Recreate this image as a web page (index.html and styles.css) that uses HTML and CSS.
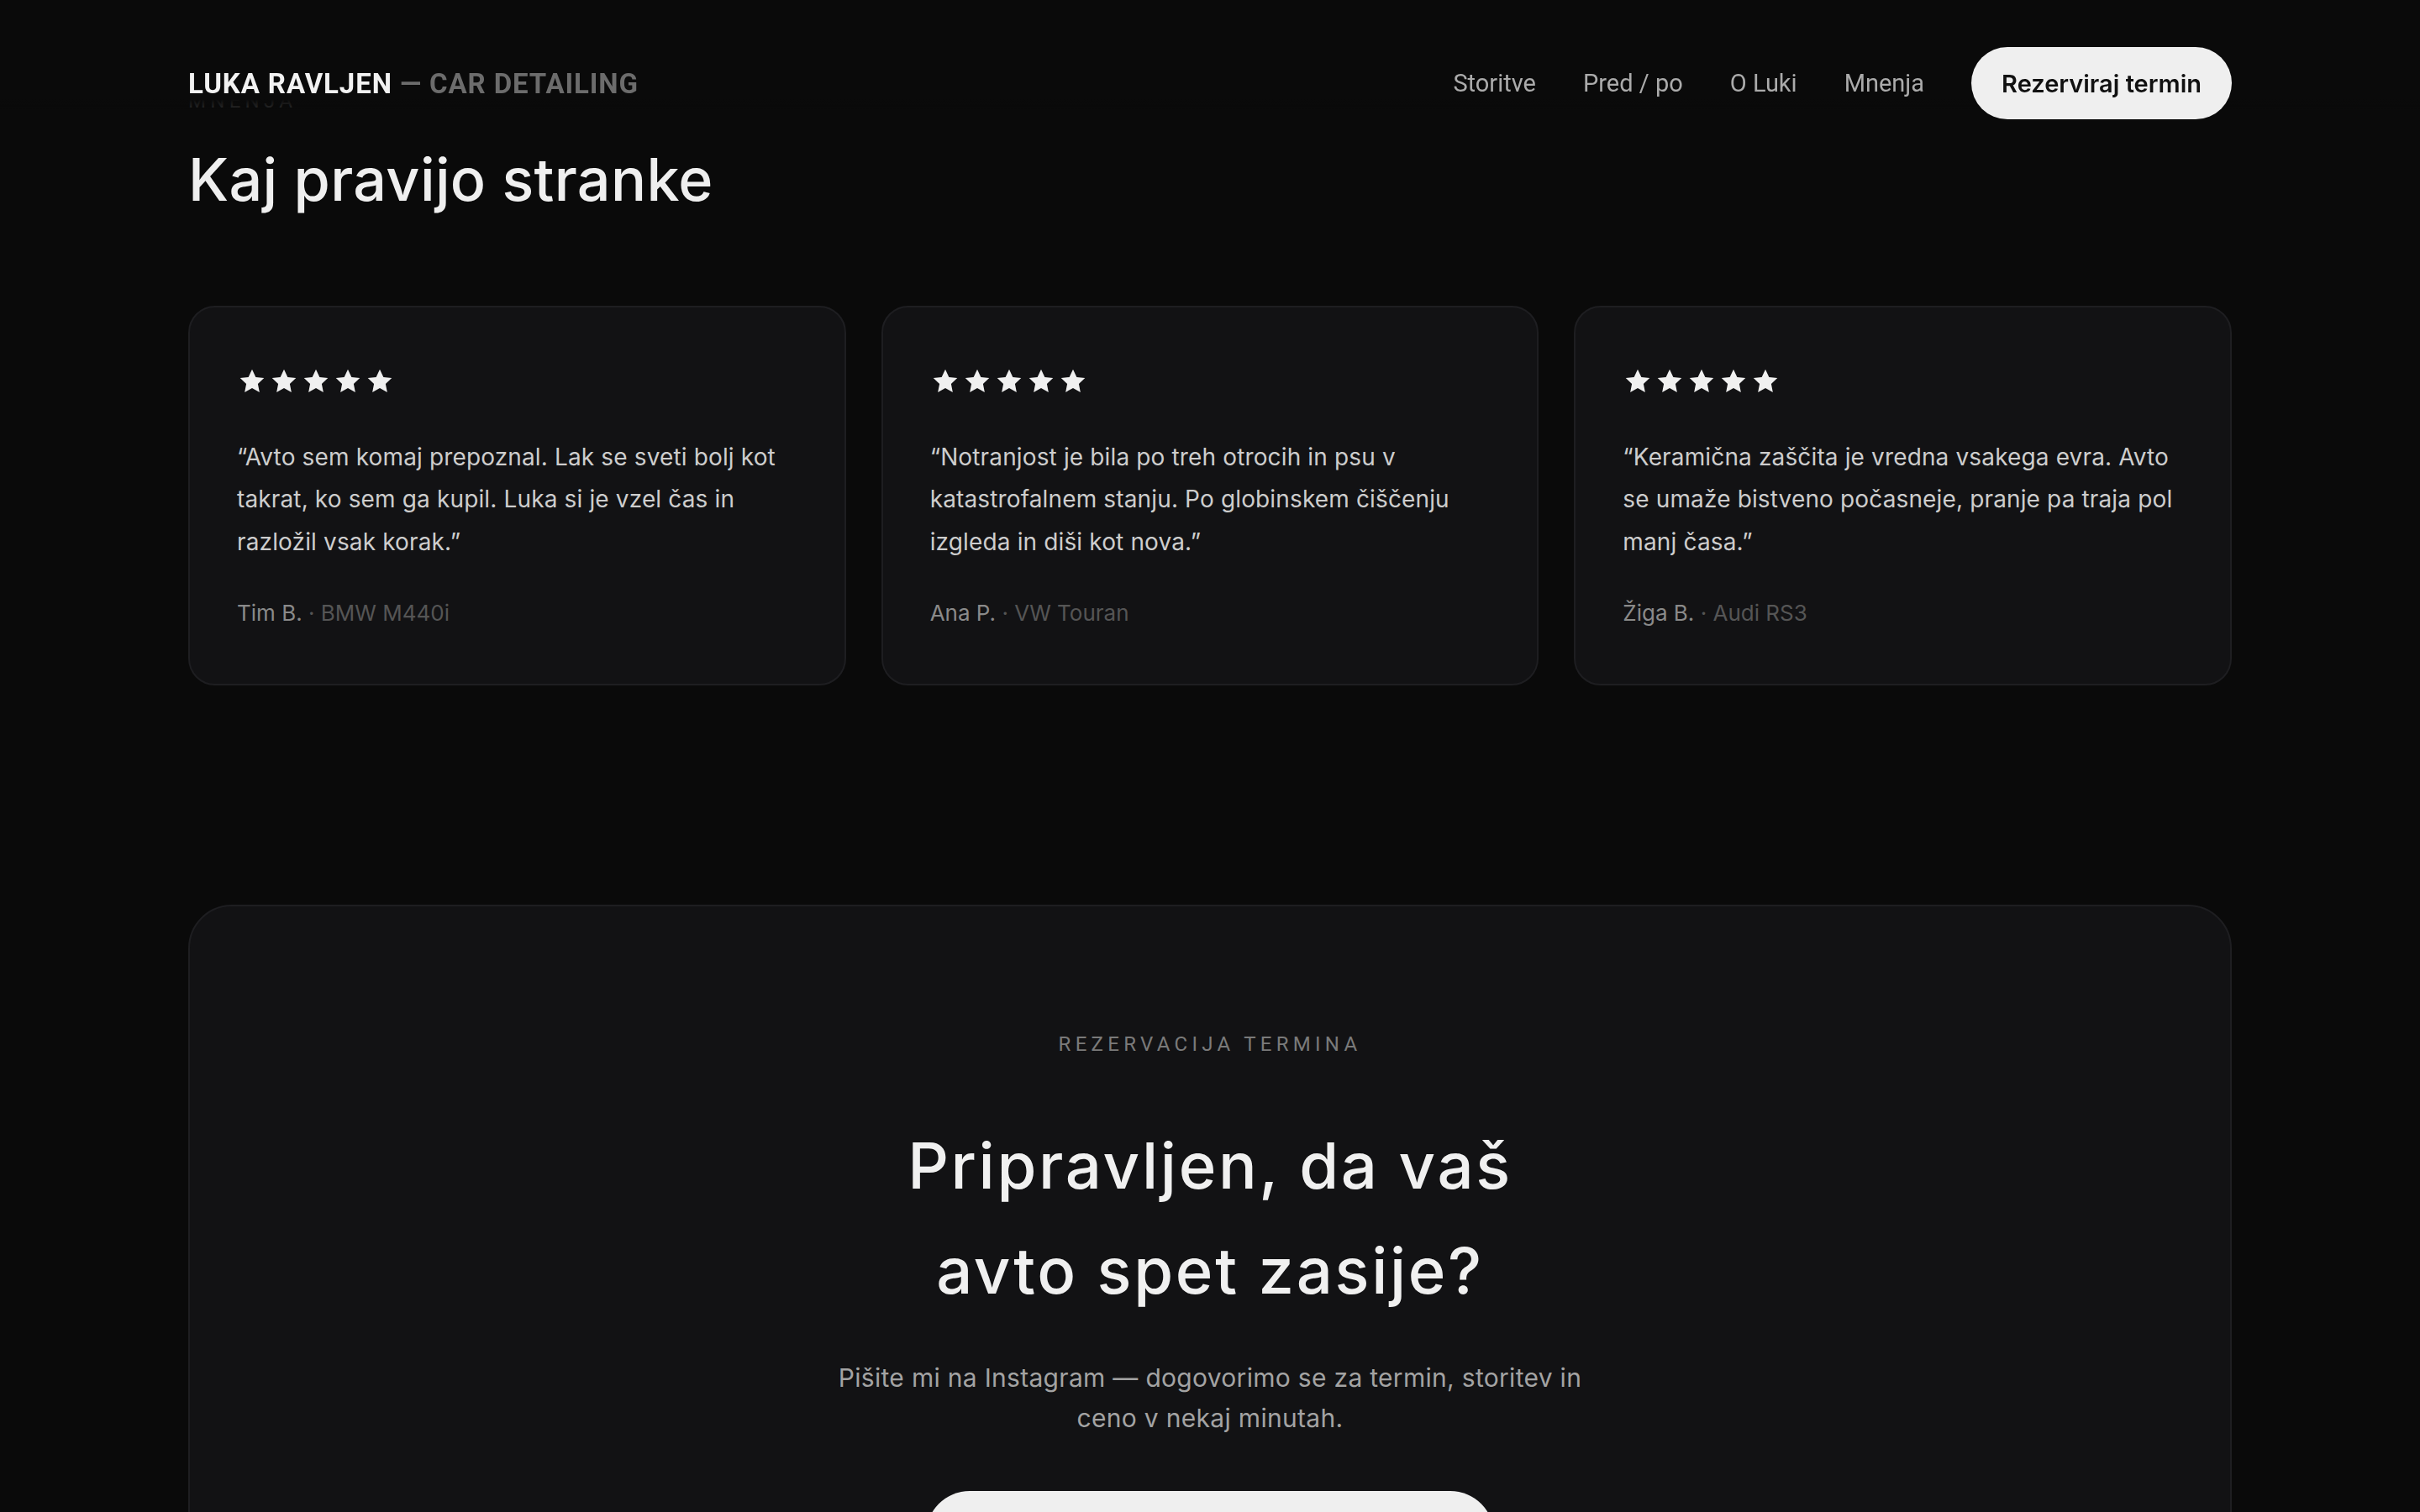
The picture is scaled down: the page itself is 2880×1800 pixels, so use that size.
FILE: index.html
```html
<!DOCTYPE html>
<html lang="sl">
<head>
  <meta charset="utf-8">
  <title>Luka Ravljen — Car Detailing</title>
  <link rel="stylesheet" href="styles.css">
</head>
<body>
  <header class="site-header">
    <div class="header-inner">
      <a class="brand" href="#">LUKA RAVLJEN <span class="brand-sub">— CAR DETAILING</span></a>
      <nav class="main-nav">
        <a class="nav-link" href="#storitve">Storitve</a>
        <a class="nav-link" href="#pred-po">Pred / po</a>
        <a class="nav-link" href="#o-luki">O Luki</a>
        <a class="nav-link" href="#mnenja">Mnenja</a>
        <a class="btn btn-light btn-nav" href="#rezervacija">Rezerviraj termin</a>
      </nav>
    </div>
  </header>

  <main>
    <section class="reviews" id="mnenja">
      <div class="container">
        <p class="eyebrow">Mnenja</p>
        <h2 class="section-title">Kaj pravijo stranke</h2>

        <div class="review-grid">
          <article class="review-card">
            <div class="stars" aria-label="5 od 5">
              <svg class="star" viewBox="0 0 24 24"><path d="M12 2.5l2.9 6.1 6.6.8-4.9 4.6 1.3 6.6L12 17.3l-5.9 3.3 1.3-6.6-4.9-4.6 6.6-.8z"/></svg>
              <svg class="star" viewBox="0 0 24 24"><path d="M12 2.5l2.9 6.1 6.6.8-4.9 4.6 1.3 6.6L12 17.3l-5.9 3.3 1.3-6.6-4.9-4.6 6.6-.8z"/></svg>
              <svg class="star" viewBox="0 0 24 24"><path d="M12 2.5l2.9 6.1 6.6.8-4.9 4.6 1.3 6.6L12 17.3l-5.9 3.3 1.3-6.6-4.9-4.6 6.6-.8z"/></svg>
              <svg class="star" viewBox="0 0 24 24"><path d="M12 2.5l2.9 6.1 6.6.8-4.9 4.6 1.3 6.6L12 17.3l-5.9 3.3 1.3-6.6-4.9-4.6 6.6-.8z"/></svg>
              <svg class="star" viewBox="0 0 24 24"><path d="M12 2.5l2.9 6.1 6.6.8-4.9 4.6 1.3 6.6L12 17.3l-5.9 3.3 1.3-6.6-4.9-4.6 6.6-.8z"/></svg>
            </div>
            <blockquote class="quote">“Avto sem komaj prepoznal. Lak se sveti bolj kot takrat, ko sem ga kupil. Luka si je vzel čas in razložil vsak korak.”</blockquote>
            <p class="reviewer">Tim B. <span class="reviewer-car">· BMW M440i</span></p>
          </article>

          <article class="review-card">
            <div class="stars" aria-label="5 od 5">
              <svg class="star" viewBox="0 0 24 24"><path d="M12 2.5l2.9 6.1 6.6.8-4.9 4.6 1.3 6.6L12 17.3l-5.9 3.3 1.3-6.6-4.9-4.6 6.6-.8z"/></svg>
              <svg class="star" viewBox="0 0 24 24"><path d="M12 2.5l2.9 6.1 6.6.8-4.9 4.6 1.3 6.6L12 17.3l-5.9 3.3 1.3-6.6-4.9-4.6 6.6-.8z"/></svg>
              <svg class="star" viewBox="0 0 24 24"><path d="M12 2.5l2.9 6.1 6.6.8-4.9 4.6 1.3 6.6L12 17.3l-5.9 3.3 1.3-6.6-4.9-4.6 6.6-.8z"/></svg>
              <svg class="star" viewBox="0 0 24 24"><path d="M12 2.5l2.9 6.1 6.6.8-4.9 4.6 1.3 6.6L12 17.3l-5.9 3.3 1.3-6.6-4.9-4.6 6.6-.8z"/></svg>
              <svg class="star" viewBox="0 0 24 24"><path d="M12 2.5l2.9 6.1 6.6.8-4.9 4.6 1.3 6.6L12 17.3l-5.9 3.3 1.3-6.6-4.9-4.6 6.6-.8z"/></svg>
            </div>
            <blockquote class="quote">“Notranjost je bila po treh otrocih in psu v katastrofalnem stanju. Po globinskem čiščenju izgleda in diši kot nova.”</blockquote>
            <p class="reviewer">Ana P. <span class="reviewer-car">· VW Touran</span></p>
          </article>

          <article class="review-card">
            <div class="stars" aria-label="5 od 5">
              <svg class="star" viewBox="0 0 24 24"><path d="M12 2.5l2.9 6.1 6.6.8-4.9 4.6 1.3 6.6L12 17.3l-5.9 3.3 1.3-6.6-4.9-4.6 6.6-.8z"/></svg>
              <svg class="star" viewBox="0 0 24 24"><path d="M12 2.5l2.9 6.1 6.6.8-4.9 4.6 1.3 6.6L12 17.3l-5.9 3.3 1.3-6.6-4.9-4.6 6.6-.8z"/></svg>
              <svg class="star" viewBox="0 0 24 24"><path d="M12 2.5l2.9 6.1 6.6.8-4.9 4.6 1.3 6.6L12 17.3l-5.9 3.3 1.3-6.6-4.9-4.6 6.6-.8z"/></svg>
              <svg class="star" viewBox="0 0 24 24"><path d="M12 2.5l2.9 6.1 6.6.8-4.9 4.6 1.3 6.6L12 17.3l-5.9 3.3 1.3-6.6-4.9-4.6 6.6-.8z"/></svg>
              <svg class="star" viewBox="0 0 24 24"><path d="M12 2.5l2.9 6.1 6.6.8-4.9 4.6 1.3 6.6L12 17.3l-5.9 3.3 1.3-6.6-4.9-4.6 6.6-.8z"/></svg>
            </div>
            <blockquote class="quote">“Keramična zaščita je vredna vsakega evra. Avto se umaže bistveno počasneje, pranje pa traja pol manj časa.”</blockquote>
            <p class="reviewer">Žiga B. <span class="reviewer-car">· Audi RS3</span></p>
          </article>
        </div>
      </div>
    </section>

    <section class="booking" id="rezervacija">
      <div class="container">
        <div class="booking-card">
          <p class="eyebrow">Rezervacija termina</p>
          <h2 class="booking-title">Pripravljen, da vaš avto spet zasije?</h2>
          <p class="booking-text">Pišite mi na Instagram — dogovorimo se za termin, storitev in ceno v nekaj minutah.</p>
          <a class="btn btn-light btn-lg" href="#">Piši mi na Instagram</a>
        </div>
      </div>
    </section>
  </main>
</body>
</html>
```

FILE: styles.css
```css
* {
  box-sizing: border-box;
}

html,
body {
  margin: 0;
  padding: 0;
}

body {
  background: #0a0a0a;
  color: #efefef;
  font-family: Inter, Roboto, "Liberation Sans", Arial, sans-serif;
  -webkit-font-smoothing: antialiased;
}

a {
  color: inherit;
  text-decoration: none;
}

.container {
  max-width: 2432px;
  margin: 0 auto;
}

/* ---------- Header ---------- */

.site-header {
  position: fixed;
  top: 0;
  left: 0;
  right: 0;
  z-index: 10;
  height: 130px;
  background: linear-gradient(to bottom, #0a0a0a 0, #0a0a0a 118px, rgba(10, 10, 10, 0.72) 130px);
}

.header-inner {
  max-width: 2432px;
  margin: 0 auto;
  padding-top: 56px;
  display: flex;
  align-items: center;
  justify-content: space-between;
}

.brand {
  font-family: Roboto, "Liberation Sans", sans-serif;
  font-size: 33px;
  font-weight: 700;
  letter-spacing: 0.027em;
  color: #f2f2f2;
  white-space: nowrap;
}

.brand-sub {
  color: #6c6c6c;
}

.main-nav {
  display: flex;
  align-items: center;
  gap: 56px;
}

.nav-link {
  font-family: Roboto, "Liberation Sans", sans-serif;
  font-size: 29px;
  color: #ababab;
}

.btn {
  display: inline-flex;
  align-items: center;
  justify-content: center;
  border-radius: 999px;
  font-weight: 600;
}

.btn-light {
  background: #efefef;
  color: #111;
}

.btn-nav {
  height: 86px;
  padding: 0 36px;
  font-size: 29px;
}

/* ---------- Shared ---------- */

.eyebrow {
  margin: 0;
  font-family: Roboto, "Liberation Sans", sans-serif;
  font-size: 24px;
  line-height: 36px;
  letter-spacing: 0.22em;
  text-transform: uppercase;
  color: #7a7a7a;
}

/* ---------- Reviews ---------- */

.reviews {
  padding: 102px 0 131px;
}

.section-title {
  margin: 37px 0 0;
  font-size: 70px;
  line-height: 77px;
  font-weight: 500;
  letter-spacing: 0.005em;
  color: #efefef;
}

.review-grid {
  margin-top: 112px;
  display: grid;
  grid-template-columns: repeat(3, 1fr);
  gap: 42px;
}

.review-card {
  background: #121214;
  border: 2px solid #1e1e21;
  border-radius: 32px;
  padding: 70px 52px 65px 56px;
}

.stars {
  display: flex;
  gap: 2px;
}

.star {
  display: block;
  width: 36px;
  height: 36px;
  fill: #f0f0f0;
}

.quote {
  margin: 47px 0 0;
  font-size: 28px;
  line-height: 50.4px;
  letter-spacing: 0.005em;
  color: #cdcdcd;
}

.reviewer {
  margin: 40px 0 0;
  font-size: 26px;
  line-height: 39px;
  color: #8a8a8a;
}

.reviewer-car {
  color: #555;
}

/* ---------- Booking ---------- */

.booking {
  padding: 130px 0 140px;
}

.booking-card {
  background: #121214;
  border: 2px solid #1e1e21;
  border-radius: 52px;
  padding: 146px 80px 140px;
  text-align: center;
}

.booking-title {
  max-width: 820px;
  margin: 64px auto 0;
  font-size: 76px;
  line-height: 125px;
  font-weight: 500;
  letter-spacing: 0.035em;
  color: #f0f0f0;
}

.booking-text {
  max-width: 940px;
  margin: 41px auto 0;
  font-size: 30px;
  line-height: 48px;
  letter-spacing: 0.01em;
  color: #a3a3a3;
}

.btn-lg {
  margin-top: 63px;
  min-width: 676px;
  height: 104px;
  padding: 0 60px;
  font-size: 30px;
}
```
